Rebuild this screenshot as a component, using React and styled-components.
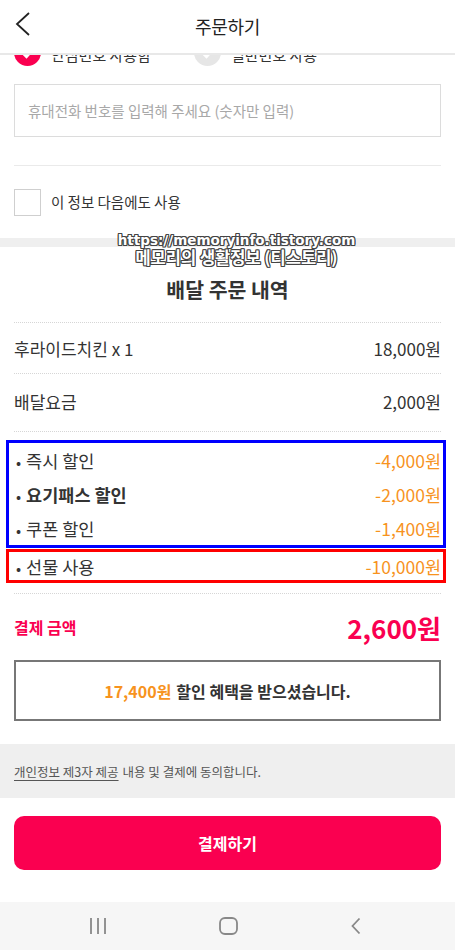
import styled, { createGlobalStyle } from "styled-components";

const PINK = "#fa0050";
const ORANGE = "#f7931e";

const orderItems = [
  { label: "후라이드치킨 x 1", price: "18,000원" },
  { label: "배달요금", price: "2,000원", tall: true },
];

const discounts = [
  { label: "즉시 할인", amount: "-4,000원" },
  { label: "요기패스 할인", amount: "-2,000원", bold: true },
  { label: "쿠폰 할인", amount: "-1,400원" },
];

function App() {
  return (
    <Page>
      <GlobalStyle />
      <Header>
        <BackButton aria-label="뒤로">
          <svg width="16" height="24" viewBox="0 0 16 24">
            <path d="M14 1 L2 12 L14 23" fill="none" stroke="#222" strokeWidth="1.8" />
          </svg>
        </BackButton>
        <Title>주문하기</Title>
      </Header>

      <Scroller>
        <Content>
          <RadioRow>
            <RadioOption>
              <RadioDot checked>
                <svg width="14" height="12" viewBox="0 0 14 12">
                  <path d="M1.5 6 L5.5 10 L12.5 2" fill="none" stroke="#fff" strokeWidth="2.4" />
                </svg>
              </RadioDot>
              <RadioLabel>안심번호 사용함</RadioLabel>
            </RadioOption>
            <RadioOption>
              <RadioDot>
                <svg width="14" height="12" viewBox="0 0 14 12">
                  <path d="M1.5 6 L5.5 10 L12.5 2" fill="none" stroke="#fff" strokeWidth="2.4" />
                </svg>
              </RadioDot>
              <RadioLabel>일반번호 사용</RadioLabel>
            </RadioOption>
          </RadioRow>

          <PhoneInput placeholder="휴대전화 번호를 입력해 주세요 (숫자만 입력)" />
          <Divider />

          <CheckRow>
            <CheckBox />
            <CheckLabel>이 정보 다음에도 사용</CheckLabel>
          </CheckRow>
        </Content>

        <SectionGap />

        <Content>
          <SectionTitle>배달 주문 내역</SectionTitle>
          <DottedLine />
          {orderItems.map((item) => (
            <div key={item.label}>
              <ItemRow tall={item.tall}>
                <span>{item.label}</span>
                <span>{item.price}</span>
              </ItemRow>
              <DottedLine />
            </div>
          ))}

          <MarkBox color="#0000ff" top="8px">
            {discounts.map((d) => (
              <DiscountRow key={d.label} height="34px">
                <DiscountLabel bold={d.bold}>
                  <Bullet>•</Bullet>
                  {d.label}
                </DiscountLabel>
                <Amount>{d.amount}</Amount>
              </DiscountRow>
            ))}
          </MarkBox>
          <MarkBox color="#ff0000" top="1px">
            <DiscountRow height="28px">
              <DiscountLabel>
                <Bullet>•</Bullet>
                선물 사용
              </DiscountLabel>
              <Amount>-10,000원</Amount>
            </DiscountRow>
          </MarkBox>

          <DottedLine style={{ marginTop: 10 }} />
          <TotalRow>
            <TotalLabel>결제 금액</TotalLabel>
            <TotalPrice>2,600원</TotalPrice>
          </TotalRow>

          <BenefitBox>
            <Orange>17,400원</Orange> 할인 혜택을 받으셨습니다.
          </BenefitBox>
        </Content>

        <AgreeBand>
          <Underline>개인정보 제3자 제공</Underline> 내용 및 결제에 동의합니다.
        </AgreeBand>

        <Content>
          <PayButton>결제하기</PayButton>
        </Content>
      </Scroller>

      <NavBar>
        <svg width="18" height="18" viewBox="0 0 18 18">
          <path d="M2 1v16M9 1v16M16 1v16" stroke="#888" strokeWidth="1.8" />
        </svg>
        <svg width="19" height="18" viewBox="0 0 19 18">
          <rect x="1" y="1" width="17" height="16" rx="5" fill="none" stroke="#888" strokeWidth="1.8" />
        </svg>
        <svg width="12" height="18" viewBox="0 0 12 18">
          <path d="M9.5 1.5 L2.5 9 L9.5 16.5" fill="none" stroke="#888" strokeWidth="1.8" />
        </svg>
      </NavBar>

      <Watermark>
        <WatermarkLine>https://memoryinfo.tistory.com</WatermarkLine>
        <WatermarkLine korean>메모리의 생활정보 (티스토리)</WatermarkLine>
      </Watermark>
    </Page>
  );
}

const GlobalStyle = createGlobalStyle`
  * { box-sizing: border-box; }
  html, body { margin: 0; padding: 0; background: #fff; }
  body {
    font-family: "Noto Sans CJK KR", "Noto Sans", sans-serif;
    color: #333;
  }
`;

const Page = styled.div`
  position: relative;
  width: 455px;
  height: 950px;
  display: flex;
  flex-direction: column;
  overflow: hidden;
  background: #fff;
`;

const Header = styled.header`
  position: relative;
  z-index: 2;
  height: 55px;
  flex-shrink: 0;
  display: flex;
  align-items: center;
  justify-content: center;
  background: #fff;
  border-bottom: 2px solid #e8e8e8;
`;

const BackButton = styled.button`
  position: absolute;
  left: 15px;
  top: 12px;
  border: 0;
  padding: 0;
  background: none;
  display: flex;
`;

const Title = styled.h1`
  margin: 0 0 2px;
  font-size: 18px;
  font-weight: 400;
  color: #222;
  letter-spacing: -0.3px;
`;

const Scroller = styled.main`
  flex: 1;
  overflow: hidden;
`;

const Content = styled.div`
  padding: 0 14px;
  display: flex;
  flex-direction: column;
`;

const RadioRow = styled.div`
  margin-top: -16px;
  height: 27px;
  display: flex;
`;

const RadioOption = styled.div`
  width: 180px;
  display: flex;
  align-items: center;
  gap: 10px;
`;

const RadioDot = styled.span`
  width: 27px;
  height: 27px;
  border-radius: 50%;
  background: ${(p) => (p.checked ? PINK : "#e6e6e6")};
  display: flex;
  align-items: center;
  justify-content: center;
`;

const RadioLabel = styled.span`
  font-size: 15px;
  line-height: 1;
  padding-top: 4px;
  color: #333;
`;

const PhoneInput = styled.input`
  margin-top: 18px;
  height: 53px;
  border: 1px solid #dcdcdc;
  padding: 0 13px;
  font-family: inherit;
  font-size: 14.5px;
  color: #333;
  outline: none;
  &::placeholder {
    color: #a8a8a8;
  }
`;

const Divider = styled.hr`
  margin: 28px 0 0;
  border: 0;
  border-top: 1px solid #eaeaea;
`;

const CheckRow = styled.label`
  margin-top: 23px;
  display: flex;
  align-items: center;
  gap: 10px;
`;

const CheckBox = styled.span`
  width: 27px;
  height: 27px;
  border: 1px solid #cfcfcf;
  background: #fff;
`;

const CheckLabel = styled.span`
  font-size: 14.5px;
  color: #333;
  line-height: 1;
`;

const SectionGap = styled.div`
  margin-top: 22px;
  height: 9px;
  background: #efefef;
`;

const SectionTitle = styled.h2`
  margin: 28px 0 19px;
  text-align: center;
  font-size: 20.5px;
  line-height: 28px;
  font-weight: 700;
  color: #333;
`;

const DottedLine = styled.div`
  border-top: 1px dotted #d6d6d6;
`;

const ItemRow = styled.div`
  height: ${(p) => (p.tall ? "57px" : "50px")};
  padding-bottom: ${(p) => (p.tall ? "2px" : "0")};
  display: flex;
  align-items: center;
  justify-content: space-between;
  font-size: 17px;
  color: #333;
`;

const MarkBox = styled.div`
  margin: ${(p) => p.top} -5px 0 -8px;
  padding: 0 2px 0 7px;
  border: 3px solid ${(p) => p.color};
`;

const DiscountRow = styled.div`
  height: ${(p) => p.height};
  display: flex;
  align-items: center;
  justify-content: space-between;
  font-size: 17.5px;
`;

const DiscountLabel = styled.span`
  color: #333;
  font-weight: ${(p) => (p.bold ? 700 : 400)};
`;

const Bullet = styled.span`
  font-weight: 400;
  font-size: 15px;
  margin-right: 5px;
`;

const Amount = styled.span`
  color: ${ORANGE};
`;

const TotalRow = styled.div`
  height: 66px;
  display: flex;
  align-items: center;
  justify-content: space-between;
`;

const TotalLabel = styled.span`
  color: ${PINK};
  font-size: 16px;
  font-weight: 700;
`;

const TotalPrice = styled.span`
  color: ${PINK};
  font-size: 26px;
  font-weight: 700;
`;

const BenefitBox = styled.div`
  height: 61px;
  border: 2px solid #777;
  display: flex;
  align-items: center;
  justify-content: center;
  gap: 5px;
  font-size: 16px;
  font-weight: 700;
  color: #333;
`;

const Orange = styled.span`
  color: ${ORANGE};
`;

const AgreeBand = styled.div`
  margin-top: 23px;
  height: 54px;
  padding: 0 14px;
  display: flex;
  align-items: center;
  gap: 4px;
  background: #efefef;
  font-size: 12.5px;
  color: #555;
`;

const Underline = styled.span`
  text-decoration: underline;
  text-underline-offset: 3px;
`;

const PayButton = styled.button`
  margin-top: 18px;
  height: 54px;
  border: 0;
  border-radius: 10px;
  background: ${PINK};
  color: #fff;
  font-family: inherit;
  font-size: 16px;
  font-weight: 700;
`;

const NavBar = styled.nav`
  height: 48px;
  flex-shrink: 0;
  background: #f6f6f6;
  display: flex;
  align-items: center;
  gap: 112px;
  padding-left: 89px;
`;

const Watermark = styled.div`
  position: absolute;
  left: 18px;
  right: 0;
  top: 232px;
  z-index: 3;
  display: flex;
  flex-direction: column;
  align-items: center;
  color: #fff;
  text-shadow: -1px -1px 0 #444, 1px -1px 0 #444, -1px 1px 0 #444, 1px 1px 0 #444,
    0 1px 0 #444, 0 -1px 0 #444, 1px 0 0 #444, -1px 0 0 #444;
`;

const WatermarkLine = styled.div`
  font-family: ${(p) =>
    p.korean ? '"Noto Sans CJK KR", sans-serif' : '"DejaVu Sans", sans-serif'};
  font-weight: 700;
  font-size: ${(p) => (p.korean ? "16.5px" : "13.5px")};
  line-height: ${(p) => (p.korean ? "18px" : "16px")};
`;

export default App;
